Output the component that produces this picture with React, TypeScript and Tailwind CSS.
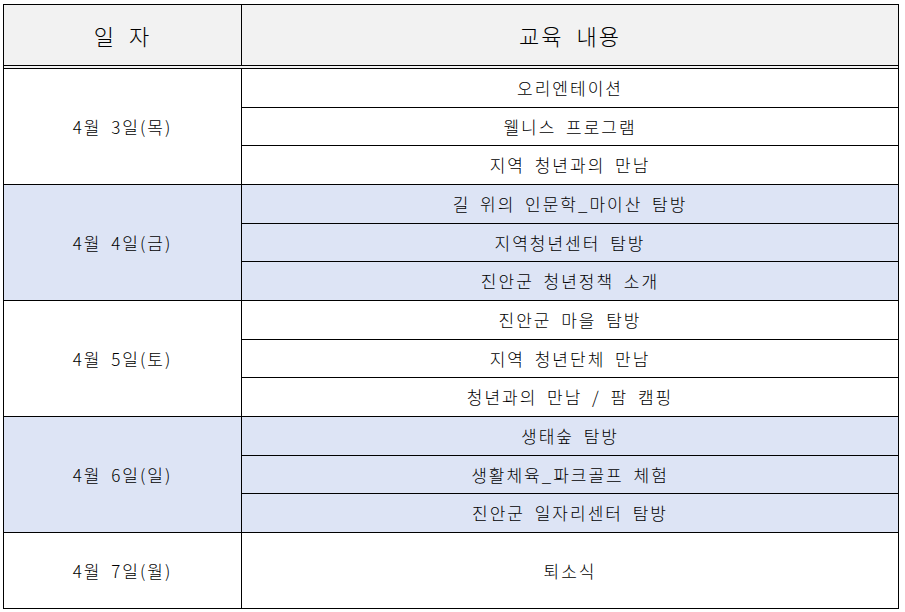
import React from "react";

type Day = {
  date: string;
  items: string[];
  shaded: boolean;
};

const DAYS: Day[] = [
  {
    date: "4월 3일(목)",
    items: ["오리엔테이션", "웰니스 프로그램", "지역 청년과의 만남"],
    shaded: false,
  },
  {
    date: "4월 4일(금)",
    items: ["길 위의 인문학_마이산 탐방", "지역청년센터 탐방", "진안군 청년정책 소개"],
    shaded: true,
  },
  {
    date: "4월 5일(토)",
    items: ["진안군 마을 탐방", "지역 청년단체 만남", "청년과의 만남 / 팜 캠핑"],
    shaded: false,
  },
  {
    date: "4월 6일(일)",
    items: ["생태숲 탐방", "생활체육_파크골프 체험", "진안군 일자리센터 탐방"],
    shaded: true,
  },
];

function DayGroup({ day }: { day: Day }) {
  return (
    <div
      className={`flex h-[116px] border-t border-black ${
        day.shaded ? "bg-[#dde4f5]" : "bg-white"
      }`}
    >
      <div className="flex w-[238px] shrink-0 items-center justify-center border-r border-black">
        {day.date}
      </div>
      <div className="flex flex-1 flex-col">
        {day.items.map((item, i) => (
          <div
            key={item}
            className={`flex flex-1 items-center justify-center ${
              i > 0 ? "border-t border-black" : ""
            }`}
          >
            {item}
          </div>
        ))}
      </div>
    </div>
  );
}

export default function App() {
  return (
    <div className="h-[612px] w-[905px] bg-white pl-[3px] pt-[4px]">
      <div
        className="w-[896px] border border-black text-[17px] font-light tracking-[2px] text-black [word-spacing:4px]"
        style={{ fontFamily: '"Noto Sans CJK KR", "Noto Sans", sans-serif' }}
      >
        <div className="flex h-[64px] border-b-4 border-double border-black bg-[#f2f2f2] text-[22px] [word-spacing:6px]">
          <div className="flex w-[238px] shrink-0 items-center justify-center border-r border-black">
            일 자
          </div>
          <div className="flex flex-1 items-center justify-center">교육 내용</div>
        </div>

        <div className="-mt-px">
          {DAYS.map((d) => (
            <DayGroup key={d.date} day={d} />
          ))}
        </div>

        <div className="flex h-[76px] border-t border-black bg-white">
          <div className="flex w-[238px] shrink-0 items-center justify-center border-r border-black">
            4월 7일(월)
          </div>
          <div className="flex flex-1 items-center justify-center">퇴소식</div>
        </div>
      </div>
    </div>
  );
}
